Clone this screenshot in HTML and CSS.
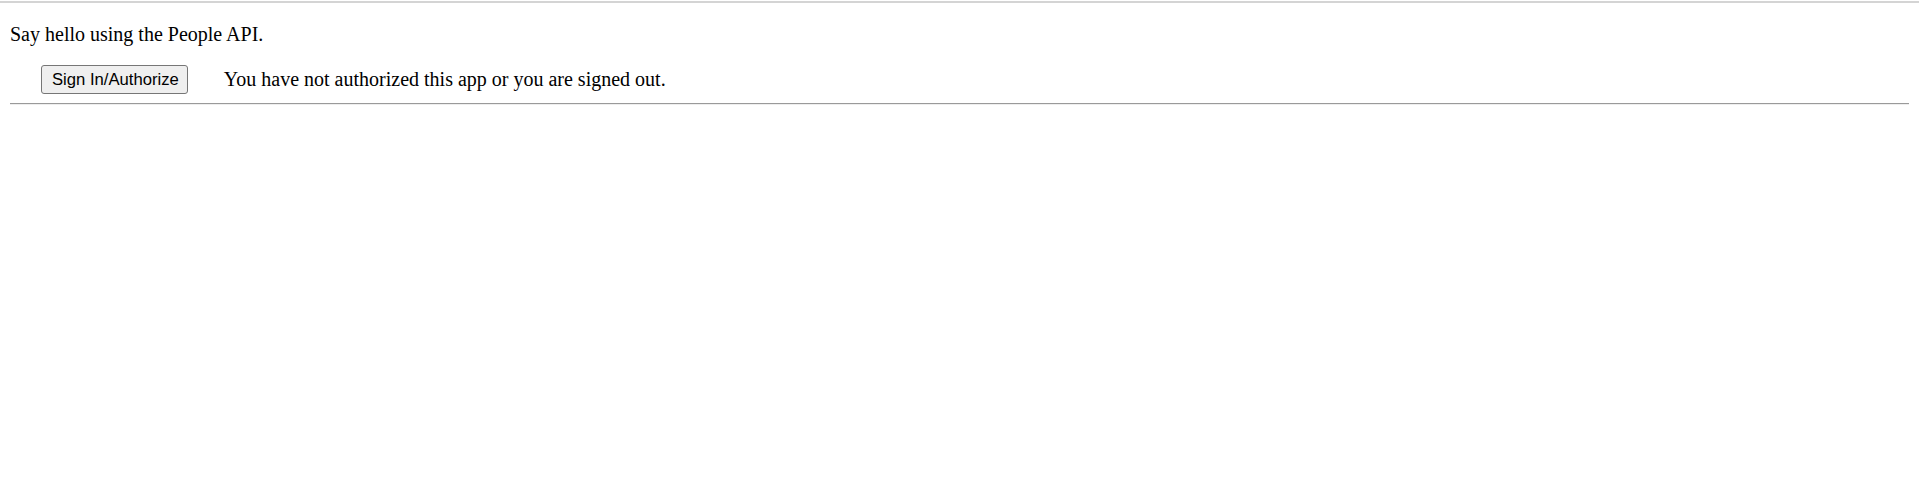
FILE: index.html
```html
<!DOCTYPE html>
<html>
<head>
<meta charset="utf-8">
<title>People API Quickstart</title>
<link rel="stylesheet" href="styles.css">
</head>
<body>
<div class="topbar"></div>
<main class="page">
  <p class="intro">Say hello using the People API.</p>
  <div class="auth-row">
    <button class="auth-btn" type="button">Sign In/Authorize</button>
    <span class="status">You have not authorized this app or you are signed out.</span>
  </div>
  <hr class="divider">
</main>
</body>
</html>
```
FILE: styles.css
```css
html, body {
  margin: 0;
  padding: 0;
  background: #ffffff;
}

body {
  font-family: "Liberation Serif", "Times New Roman", serif;
  font-size: 20px;
  color: #000000;
}

.topbar {
  margin-top: 1px;
  border-top: 2px solid #d4d4d4;
}

.page {
  padding: 0 10px;
}

.intro {
  margin: 20px 0 0 0;
  line-height: 23px;
}

.auth-row {
  display: flex;
  align-items: center;
  gap: 36px;
  margin-top: 19px;
  padding-left: 31px;
}

.auth-btn {
  font-family: "Liberation Sans", Arial, sans-serif;
  font-size: 16.67px;
  line-height: 19px;
  padding: 4px 8px 4px 10px;
  margin: 0;
  border: 1px solid #767676;
  border-radius: 3px;
  background: #efefef;
  color: #000000;
}

.status {
  line-height: 23px;
}

.divider {
  margin: 9px 0 0 0;
  height: 0;
  border: none;
  border-top: 1px solid #9a9a9a;
  border-bottom: 1px solid #eeeeee;
}
```
